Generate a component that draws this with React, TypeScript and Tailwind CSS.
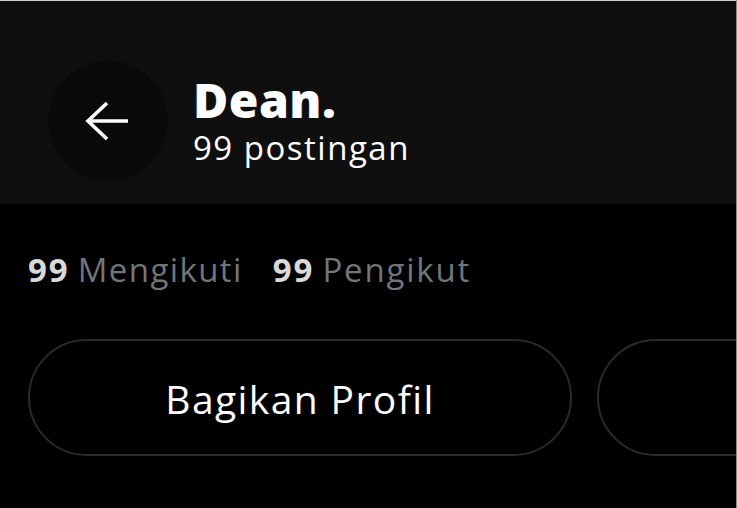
import React from "react";

export default function App() {
  return (
    <div className="w-[737px] h-[508px] bg-black overflow-hidden flex flex-col border-r border-r-[#8a8a8a] font-['Open_Sans',sans-serif]">
      <div className="h-[204px] shrink-0 bg-[#0f0f0f] border-t border-t-[#cfcfcf] flex items-start pt-[60px] pl-[48px]">
        <div className="w-[120px] h-[120px] rounded-full bg-[#0a0a0a] flex items-center justify-center shrink-0">
          <svg width="120" height="120" viewBox="0 0 120 120" fill="none">
            <path d="M40 60 H80 M59 42 L40 60 L59 78" stroke="white" strokeWidth="3.6" strokeLinecap="butt" strokeLinejoin="miter" />
          </svg>
        </div>
        <div className="ml-[25px] flex flex-col">
          <div className="text-white font-extrabold text-[48px] leading-[48px] mt-[15px] tracking-[0.5px]">Dean.</div>
          <div className="text-white text-[33px] leading-[40px] tracking-[1.5px] mt-[4px]">99 postingan</div>
        </div>
      </div>
      <div className="flex items-center pl-[28px] mt-[46px] text-[33px] leading-[40px] tracking-[1.4px]">
        <span className="font-bold text-[#d9d9d9] tracking-[2px]">99</span>
        <span className="ml-[8px] text-[#71767b]">Mengikuti</span>
        <span className="ml-[30px] font-bold text-[#d9d9d9] tracking-[2px]">99</span>
        <span className="ml-[8px] text-[#71767b] tracking-[1.8px]">Pengikut</span>
      </div>
      <div className="flex mt-[49px] pl-[28px] gap-[25px]">
        <div className="w-[544px] h-[117px] shrink-0 rounded-full border-2 border-[#2a2a2a] flex items-center justify-center">
          <span className="text-white font-medium text-[39px] tracking-[1.4px] leading-[44px] mt-[2px]">Bagikan Profil</span>
        </div>
        <div className="w-[300px] h-[117px] shrink-0 rounded-full border-2 border-[#2a2a2a]" />
      </div>
    </div>
  );
}
